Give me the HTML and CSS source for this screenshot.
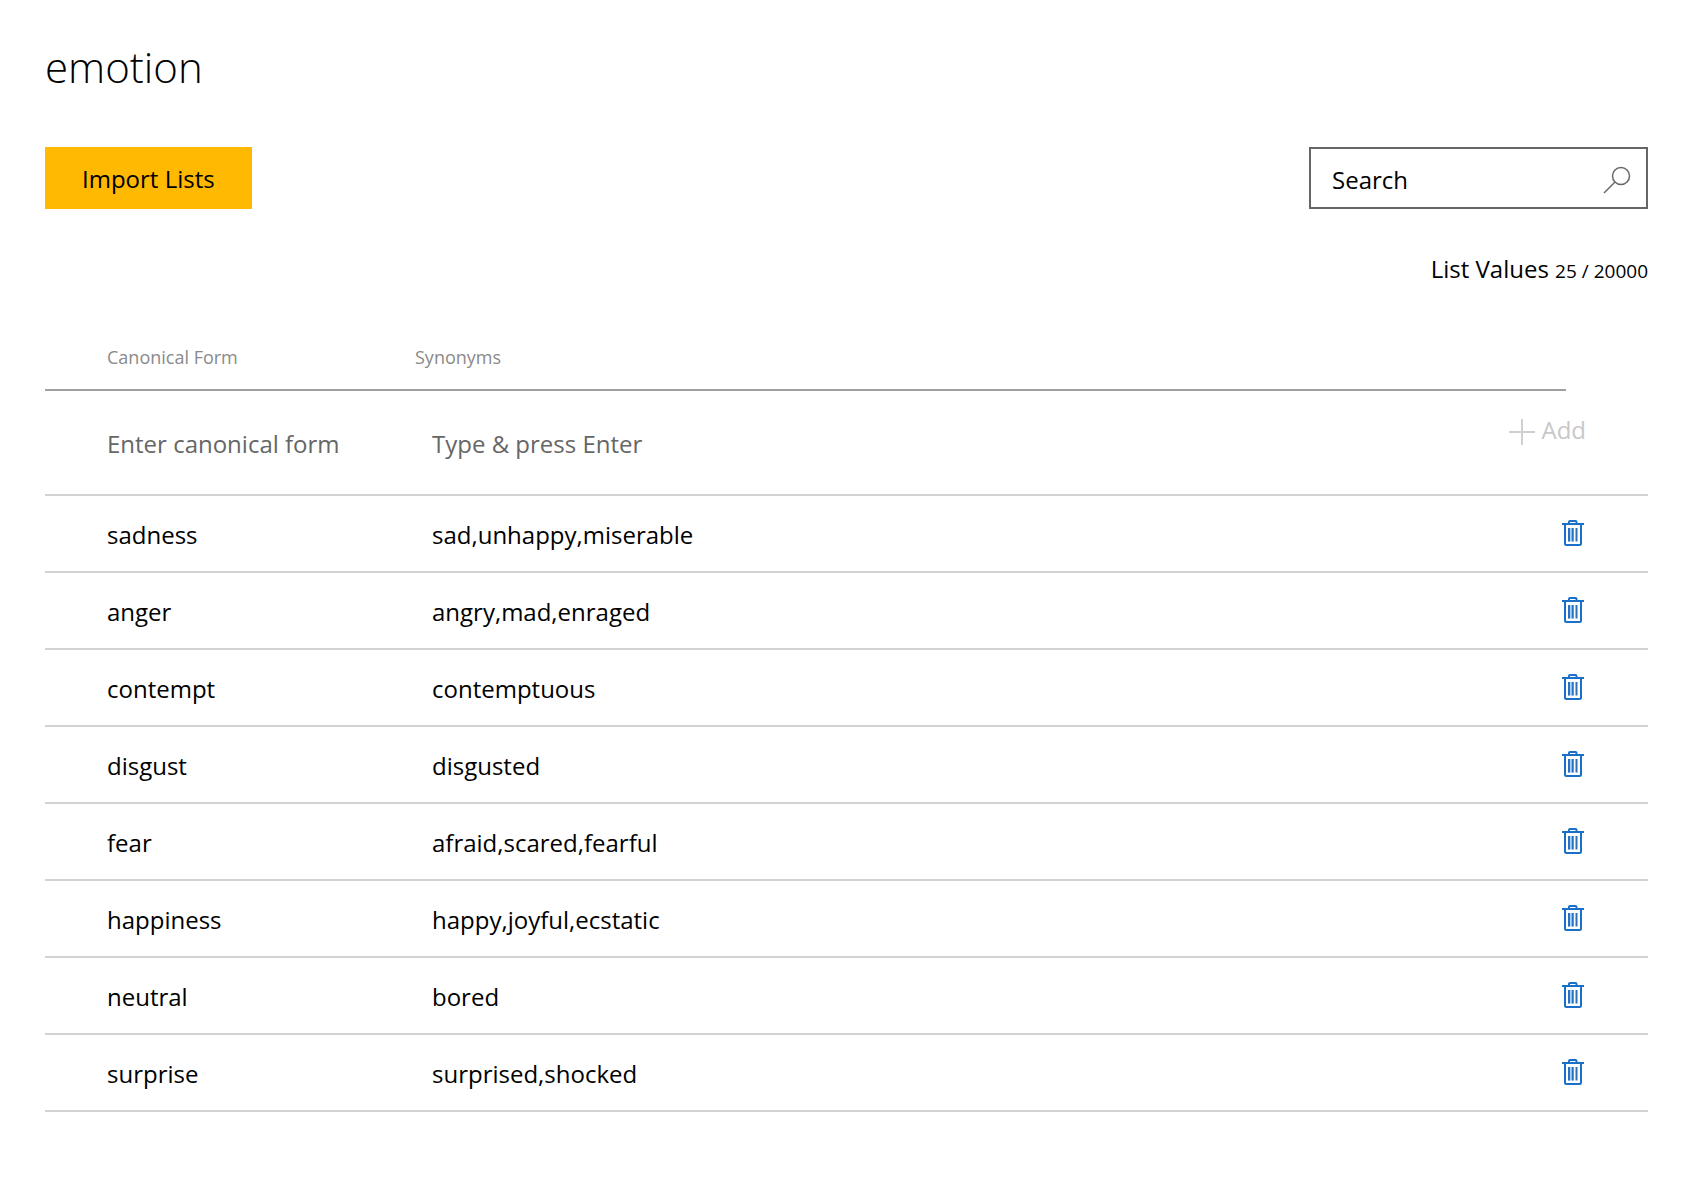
FILE: index.html
```html
<!DOCTYPE html>
<html lang="en">
<head>
<meta charset="utf-8">
<meta name="viewport" content="width=device-width, initial-scale=1">
<title>emotion</title>
<link rel="stylesheet" href="styles.css">
</head>
<body>
<svg class="sprite" aria-hidden="true">
  <symbol id="trash" viewBox="0 0 22 26">
    <path class="trash-fill" d="M6 8h5v13.500H6z"/>
    <path class="trash-line" d="M0 4h22M7 4V2q0-1 1-1h5.500q1 0 1 1v2M3 4v19.500q0 1.500 1.500 1.500h13q1.500 0 1.500-1.500V4"/>
    <path class="trash-bar" d="M7 8v13.500M10.750 8v13.500M14.500 8v13.500"/>
  </symbol>
</svg>
<main class="page">
  <h1 class="title">emotion</h1>
  <div class="toolbar">
    <button class="import" type="button">Import Lists</button>
    <label class="search">
      <input class="search-input" type="search" placeholder="Search" aria-label="Search">
      <svg class="search-icon" viewBox="0 0 28 28" aria-hidden="true"><circle cx="18" cy="10" r="8.500"/><path d="M12 16L1 27"/></svg>
    </label>
  </div>
  <p class="count">List Values <span class="count-number">25 / 20000</span></p>
  <table class="values">
    <colgroup><col class="col-form"><col><col class="col-action"><col class="col-end"></colgroup>
    <thead>
      <tr><th scope="col" class="first">Canonical Form</th><th scope="col" colspan="2">Synonyms</th><td></td></tr>
    </thead>
    <tbody>
      <tr class="entry">
        <td class="first"><input class="field" type="text" placeholder="Enter canonical form" aria-label="Canonical form"></td>
        <td class="synonyms"><input class="field" type="text" placeholder="Type &amp; press Enter" aria-label="Synonyms"></td>
        <td class="action" colspan="2"><button class="add" type="button" disabled><svg class="plus" viewBox="0 0 26 26" aria-hidden="true"><path d="M13 0v26M0 13h26"/></svg>Add</button></td>
      </tr>
      <tr><td class="first">sadness</td><td class="synonyms">sad,unhappy,miserable</td><td class="action" colspan="2"><button class="delete" type="button" aria-label="Delete sadness"><svg class="trash"><use href="#trash"/></svg></button></td></tr>
      <tr><td class="first">anger</td><td class="synonyms">angry,mad,enraged</td><td class="action" colspan="2"><button class="delete" type="button" aria-label="Delete anger"><svg class="trash"><use href="#trash"/></svg></button></td></tr>
      <tr><td class="first">contempt</td><td class="synonyms">contemptuous</td><td class="action" colspan="2"><button class="delete" type="button" aria-label="Delete contempt"><svg class="trash"><use href="#trash"/></svg></button></td></tr>
      <tr><td class="first">disgust</td><td class="synonyms">disgusted</td><td class="action" colspan="2"><button class="delete" type="button" aria-label="Delete disgust"><svg class="trash"><use href="#trash"/></svg></button></td></tr>
      <tr><td class="first">fear</td><td class="synonyms">afraid,scared,fearful</td><td class="action" colspan="2"><button class="delete" type="button" aria-label="Delete fear"><svg class="trash"><use href="#trash"/></svg></button></td></tr>
      <tr><td class="first">happiness</td><td class="synonyms">happy,joyful,ecstatic</td><td class="action" colspan="2"><button class="delete" type="button" aria-label="Delete happiness"><svg class="trash"><use href="#trash"/></svg></button></td></tr>
      <tr><td class="first">neutral</td><td class="synonyms">bored</td><td class="action" colspan="2"><button class="delete" type="button" aria-label="Delete neutral"><svg class="trash"><use href="#trash"/></svg></button></td></tr>
      <tr><td class="first">surprise</td><td class="synonyms">surprised,shocked</td><td class="action" colspan="2"><button class="delete" type="button" aria-label="Delete surprise"><svg class="trash"><use href="#trash"/></svg></button></td></tr>
    </tbody>
  </table>
</main>
</body>
</html>
```
FILE: styles.css
```css
* { box-sizing: border-box; }
body {
  margin: 0;
  background: #fff;
  color: #000;
  font: 24px/32px "Segoe UI", "Open Sans", "Noto Sans", sans-serif;
}
button, input { font: inherit; color: inherit; }
.sprite { position: absolute; width: 0; height: 0; }
.page { padding: 37px 47px 48px 45px; }
.title { margin: 0; font-size: 42px; line-height: 60px; font-weight: 300; }
.toolbar {
  display: flex;
  justify-content: space-between;
  align-items: center;
  margin-top: 50px;
}
.import {
  height: 62px;
  padding: 1px 37px 0 37px;
  border: 0;
  background: #ffb900;
  cursor: pointer;
}
.search {
  display: flex;
  align-items: center;
  width: 339px;
  height: 62px;
  padding: 4px 15px 0 21px;
  border: 2px solid #666;
}
.search-input {
  flex: 1;
  min-width: 0;
  padding: 0;
  border: 0;
  outline: 0;
  background: none;
}
.search-input::placeholder { color: #000; opacity: 1; }
.search-icon { width: 28px; height: 28px; fill: none; stroke: #666; stroke-width: 1.500; }
.count { margin: 44px 0 0; text-align: right; }
.count-number { font-size: 19px; }
.values {
  width: 100%;
  margin-top: 40px;
  table-layout: fixed;
  border-collapse: separate;
  border-spacing: 0;
}
.col-form { width: 370px; }
.col-action { width: 120px; }
.col-end { width: 82px; }
th {
  height: 64px;
  padding: 0 0 2px;
  border-bottom: 2px solid #a0a0a0;
  color: #8a8a8a;
  font-size: 18px;
  font-weight: 400;
  text-align: left;
}
tbody td {
  height: 77px;
  padding: 2px 0 0;
  border-bottom: 2px solid #d2d2d2;
  vertical-align: middle;
}
.values .first { padding-left: 62px; }
.values .synonyms { padding-left: 17px; }
.values .entry td { height: 105px; }
.field {
  display: block;
  width: 100%;
  padding: 0;
  border: 0;
  outline: 0;
  background: none;
}
.field::placeholder { color: #666; opacity: 1; }
.values .action { padding: 0 64px 2px 0; }
.values .entry .action { padding: 0 62px 26px 0; }
.add {
  display: flex;
  align-items: flex-end;
  gap: 6px;
  margin-left: auto;
  padding: 0;
  border: 0;
  background: none;
  color: #c8c8c8;
}
.plus { width: 26px; height: 26px; margin-bottom: 1px; fill: none; stroke: #d0d0d0; stroke-width: 2; }
.delete {
  display: block;
  margin-left: auto;
  padding: 0;
  border: 0;
  background: none;
  cursor: pointer;
}
.trash { display: block; width: 22px; height: 26px; }
.trash-fill { fill: #a8d4ff; }
.trash-line { fill: none; stroke: #1a6fc9; stroke-width: 2; }
.trash-bar { fill: none; stroke: #2a72bd; stroke-width: 2; }
```
